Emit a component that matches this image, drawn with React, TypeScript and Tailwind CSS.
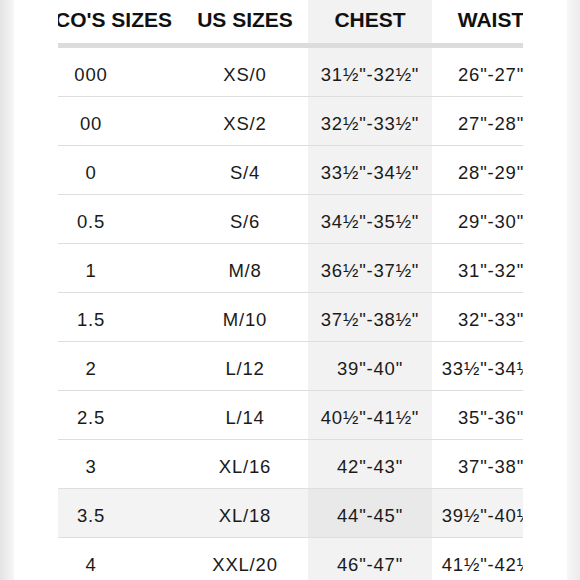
const rows: [string, string, string, string][] = [
  ['000', 'XS/0', '31½"-32½"', '26"-27"'],
  ['00', 'XS/2', '32½"-33½"', '27"-28"'],
  ['0', 'S/4', '33½"-34½"', '28"-29"'],
  ['0.5', 'S/6', '34½"-35½"', '29"-30"'],
  ['1', 'M/8', '36½"-37½"', '31"-32"'],
  ['1.5', 'M/10', '37½"-38½"', '32"-33"'],
  ['2', 'L/12', '39"-40"', '33½"-34½"'],
  ['2.5', 'L/14', '40½"-41½"', '35"-36"'],
  ['3', 'XL/16', '42"-43"', '37"-38"'],
  ['3.5', 'XL/18', '44"-45"', '39½"-40½"'],
  ['4', 'XXL/20', '46"-47"', '41½"-42½"'],
]

const font = { fontFamily: '"Liberation Sans", Arial, sans-serif' }

export default function App() {
  return (
    <div className="flex h-[580px] w-[580px] overflow-hidden bg-white" style={font}>
      {/* left page edge */}
      <div className="w-[14px] shrink-0 bg-gradient-to-r from-[#e4e4e4] to-[#f6f6f6]" />

      <div className="flex-1 pl-[44px]">
        <div className="w-[465px] overflow-hidden">
          <div className="grid w-[492px] grid-cols-[124px_126px_124px_118px]">
            {/* header */}
            <div className="flex h-[43px] items-center justify-end overflow-hidden whitespace-nowrap pb-[3px] pr-[10px] text-[21px] font-bold text-[#111]">
              MARCO'S SIZES
            </div>
            <div className="flex h-[43px] items-center justify-center whitespace-nowrap pb-[3px] text-[21px] font-bold text-[#111]">
              US SIZES
            </div>
            <div className="flex h-[43px] items-center justify-center bg-[#f2f2f2] pb-[3px] text-[21px] font-bold text-[#111]">
              CHEST
            </div>
            <div className="flex h-[43px] items-center justify-center pb-[3px] text-[21px] font-bold text-[#111]">
              WAIST
            </div>
            <div className="col-span-4 h-[5px] bg-[#dcdcdc]" />

            {rows.map((r, i) => {
              const hl = i === 9
              const cell = `flex h-[49px] items-center justify-center whitespace-nowrap border-b-[1.5px] border-[#dedede] pt-[5px] text-[18.5px] tracking-[0.8px] text-[#1a1a1a] ${hl ? 'bg-[#f3f3f3]' : ''}`
              return (
                <div key={r[0]} className="contents">
                  <div className={`${cell} pr-[58px]`}>{r[0]}</div>
                  <div className={cell}>{r[1]}</div>
                  <div className={`${cell} ${hl ? '!bg-[#e9e9e9]' : 'bg-[#f2f2f2]'}`}>{r[2]}</div>
                  <div className={cell}>{r[3]}</div>
                </div>
              )
            })}
          </div>
        </div>
      </div>

      {/* right page edge */}
      <div className="w-[13px] shrink-0 bg-gradient-to-r from-[#f7f7f7] to-[#ebebeb]" />
    </div>
  )
}
